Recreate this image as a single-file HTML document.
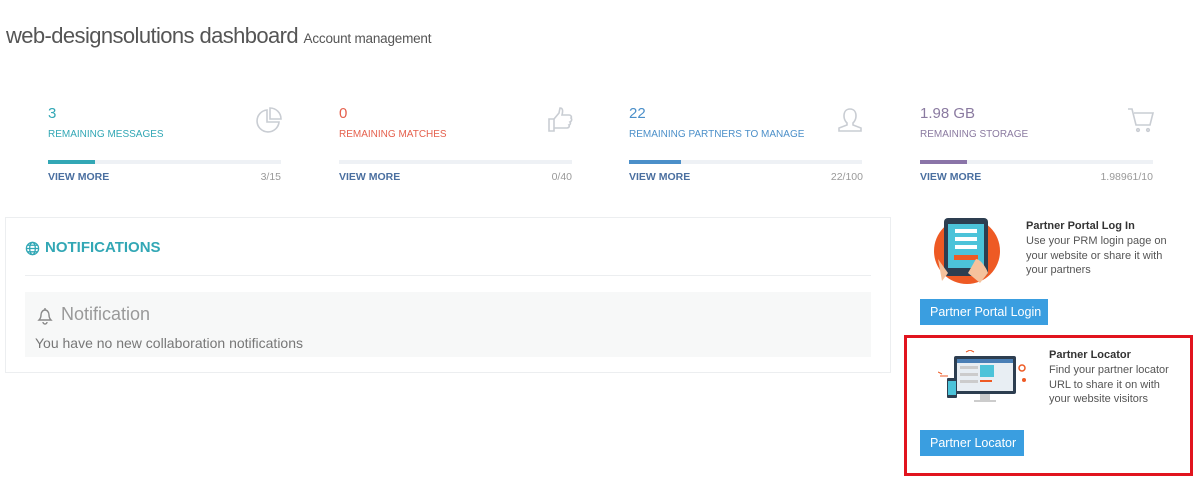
<!DOCTYPE html>
<html><head><style>
*{margin:0;padding:0;box-sizing:border-box}
body{width:1200px;height:482px;background:#fff;font-family:"Liberation Sans",sans-serif;position:relative;overflow:hidden;color:#555}
.a{position:absolute;white-space:nowrap}
.num{font-size:15px}
.lbl{font-size:10px}
.bar{height:4px;background:#eef1f5;width:233px}
.bar i{display:block;height:4px}
.vm{font-size:10.5px;color:#4a6fa0;font-weight:bold}
.cnt{font-size:10.5px;color:#999;text-align:right;width:100px}
.btn{background:#3a9ee0;color:#fff;font-size:12.5px;line-height:26px;padding:0 10px}
.pt{font-size:11px;color:#555;line-height:14.5px}
</style></head><body>
<div class="a" style="left:6px;top:23px;font-size:22px;color:#555;letter-spacing:-0.6px">web-designsolutions dashboard <span style="font-size:13.5px;letter-spacing:-0.2px">Account management</span></div>

<!-- stats -->
<div class="a num" style="left:48px;top:105px;color:#32a7b5">3</div>
<div class="a lbl" style="left:48px;top:129px;color:#32a7b5">REMAINING MESSAGES</div>
<div class="a bar" style="left:48px;top:160px"><i style="width:47px;background:#32a7b5"></i></div>
<div class="a vm" style="left:48px;top:171px">VIEW MORE</div>
<div class="a cnt" style="left:181px;top:171px">3/15</div>
<svg class="a" style="left:255px;top:106px" width="28" height="28" viewBox="0 0 28 28" fill="none" stroke="#c9cdd3" stroke-width="1.6"><path d="M12 4A11 11 0 1 0 24 16H12Z"/><path d="M15 2V13H26A11 11 0 0 0 15 2Z"/></svg>

<div class="a num" style="left:339px;top:105px;color:#e5604d">0</div>
<div class="a lbl" style="left:339px;top:129px;color:#e5604d">REMAINING MATCHES</div>
<div class="a bar" style="left:339px;top:160px"></div>
<div class="a vm" style="left:339px;top:171px">VIEW MORE</div>
<div class="a cnt" style="left:472px;top:171px">0/40</div>
<svg class="a" style="left:546px;top:106px" width="28" height="28" viewBox="0 0 28 28" fill="none" stroke="#c9cdd3" stroke-width="1.6"><path d="M3 13h5v12H3z"/><path d="M8 13l5-6 1-5c3 0 3 3 2 7h7c2 0 3 2 2 3 1 1 1 3-1 4 1 1 0 3-1 3 1 2-1 3-2 3H8"/></svg>

<div class="a num" style="left:629px;top:105px;color:#4b8fc9">22</div>
<div class="a lbl" style="left:629px;top:129px;color:#4b8fc9">REMAINING PARTNERS TO MANAGE</div>
<div class="a bar" style="left:629px;top:160px"><i style="width:52px;background:#4b8fc9"></i></div>
<div class="a vm" style="left:629px;top:171px">VIEW MORE</div>
<div class="a cnt" style="left:763px;top:171px">22/100</div>
<svg class="a" style="left:836px;top:106px" width="28" height="28" viewBox="0 0 28 28" fill="none" stroke="#c9cdd3" stroke-width="1.6"><path d="M14 3c-4 0-6 3-6 7s2 6 3 7v2l-8 3v3h22v-3l-8-3v-2c1-1 3-3 3-7s-2-7-6-7z"/></svg>

<div class="a num" style="left:920px;top:105px;color:#8a7aa0">1.98 GB</div>
<div class="a lbl" style="left:920px;top:129px;color:#8a7aa0">REMAINING STORAGE</div>
<div class="a bar" style="left:920px;top:160px"><i style="width:47px;background:#8a74a8"></i></div>
<div class="a vm" style="left:920px;top:171px">VIEW MORE</div>
<div class="a cnt" style="left:1053px;top:171px">1.98961/10</div>
<svg class="a" style="left:1127px;top:106px" width="28" height="28" viewBox="0 0 28 28" fill="none" stroke="#c9cdd3" stroke-width="1.6"><path d="M1 3h4l4 16h14l3-12H7"/><circle cx="11" cy="24" r="1.3"/><circle cx="21" cy="24" r="1.3"/></svg>

<!-- notifications -->
<div class="a" style="left:5px;top:217px;width:886px;height:156px;border:1px solid #eceef0"></div>
<svg class="a" style="left:25px;top:241px" width="15" height="15" viewBox="0 0 16 16" fill="none" stroke="#32a7b5" stroke-width="1.4"><circle cx="8" cy="8" r="6.5"/><ellipse cx="8" cy="8" rx="3" ry="6.5"/><path d="M1.5 8h13M2.5 4.5h11M2.5 11.5h11"/></svg>
<div class="a" style="left:45px;top:239px;font-size:15px;font-weight:bold;color:#32a7b5">NOTIFICATIONS</div>
<div class="a" style="left:25px;top:275px;width:846px;height:1px;background:#eceef0"></div>
<div class="a" style="left:25px;top:292px;width:846px;height:65px;background:#f7f8f8"></div>
<svg class="a" style="left:36px;top:306px" width="18" height="19" viewBox="0 0 18 19" fill="none" stroke="#888" stroke-width="1.4"><path d="M3 14c1-1 2-2 2-5 0-3 2-5 4-5s4 2 4 5c0 3 1 4 2 5z"/><path d="M9 2v2M7 16a2 2 0 0 0 4 0"/></svg>
<div class="a" style="left:61px;top:304px;font-size:18px;color:#999">Notification</div>
<div class="a" style="left:35px;top:335px;font-size:14px;color:#777">You have no new collaboration notifications</div>

<!-- partner portal -->
<svg class="a" style="left:932px;top:215px" width="72" height="70" viewBox="0 0 72 70"><circle cx="35" cy="36" r="33" fill="#ee5a24"/><rect x="12" y="3" width="44" height="58" rx="4" fill="#2d3e50"/><rect x="16" y="9" width="36" height="44" fill="#4cc3d9"/><rect x="23" y="14" width="22" height="4" fill="#fff"/><rect x="23" y="22" width="22" height="4" fill="#fff"/><rect x="23" y="30" width="22" height="4" fill="#fff"/><rect x="22" y="40" width="24" height="5" fill="#ee5a24"/><path d="M44 44c4 0 10 8 12 14l-8 10-12-10z" fill="#f5c29c"/><path d="M6 44l10 14-6 8z" fill="#f5c29c"/></svg>
<div class="a pt" style="left:1026px;top:219px;font-weight:bold;color:#333">Partner Portal Log In</div>
<div class="a pt" style="left:1026px;top:234px">Use your PRM login page on<br>your website or share it with<br>your partners</div>
<div class="a btn" style="left:920px;top:299px;width:128px">Partner Portal Login</div>

<!-- partner locator -->
<div class="a" style="left:904px;top:335px;width:289px;height:141px;border:3px solid #e1141e"></div>
<svg class="a" style="left:938px;top:350px" width="92" height="60" viewBox="0 0 92 60"><rect x="16" y="6" width="62" height="38" rx="2" fill="#2d3e50"/><rect x="19" y="9" width="56" height="32" fill="#e8eef3"/><rect x="19" y="9" width="56" height="4" fill="#4a7fb5"/><rect x="42" y="15" width="14" height="12" fill="#4cc3d9"/><rect x="22" y="16" width="18" height="3" fill="#ccc"/><rect x="22" y="23" width="18" height="3" fill="#ccc"/><rect x="22" y="30" width="18" height="3" fill="#ccc"/><rect x="42" y="30" width="12" height="2" fill="#ee5a24"/><rect x="42" y="44" width="10" height="6" fill="#ccc"/><rect x="36" y="50" width="22" height="2" fill="#ccc"/><rect x="9" y="28" width="10" height="20" rx="1" fill="#2d3e50"/><rect x="10" y="31" width="8" height="14" fill="#4cc3d9"/><circle cx="84" cy="18" r="3" fill="none" stroke="#ee5a24" stroke-width="1.5"/><circle cx="86" cy="30" r="2" fill="#ee5a24"/><path d="M2 26h8M0 22l4 2" stroke="#ee5a24"/><path d="M28 2l4-2 4 2" stroke="#ee5a24" fill="none"/></svg>
<div class="a pt" style="left:1049px;top:348px;font-weight:bold;color:#333">Partner Locator</div>
<div class="a pt" style="left:1049px;top:363px">Find your partner locator<br>URL to share it on with<br>your website visitors</div>
<div class="a btn" style="left:920px;top:430px;width:104px">Partner Locator</div>
</body></html>
